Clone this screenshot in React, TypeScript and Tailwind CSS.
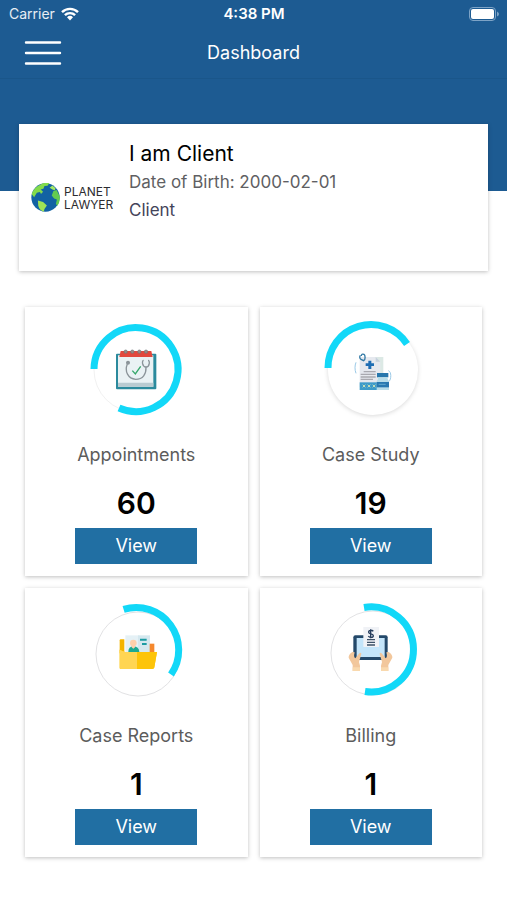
import type { ReactNode } from "react";

type Ring = {
  arc: string;
  disc: { cx: number; cy: number; r: number };
  faint?: boolean;
  raised?: boolean;
};

type Tile = {
  label: string;
  count: number;
  href: string;
  ring: Ring;
  icon: ReactNode;
};

function CalendarIcon() {
  return (
    <svg x="27" y="25" width="42" height="42" viewBox="0 0 126 126">
      <rect x="3" y="17" width="121" height="107" rx="3" fill="#2b8a9d" />
      <path d="M9 22h106v94H9z" fill="#eaf2f4" />
      <path d="M9 104h106v12H9z" fill="#b9cbd1" />
      <path d="M17 9h92l4 18H13z" fill="#e2483d" />
      <g fill="#9a8a86" stroke="#6d7679" strokeWidth="2">
        <circle cx="32" cy="11" r="5" />
        <circle cx="52" cy="11" r="5" />
        <circle cx="73" cy="11" r="5" />
        <circle cx="93" cy="11" r="5" />
      </g>
      <g fill="none" stroke="#8b9499" strokeWidth="4">
        <path d="M37 48c-9 22 2 44 25 46 22 0 32-16 31-37" />
        <path d="M86 37c-6 0-5 19 7 20 12-1 12-20 6-20" />
        <circle cx="39" cy="44" r="4" fill="#8b9499" />
      </g>
      <path d="M52 68l9 10 16-23" fill="none" stroke="#37a86b" strokeWidth="4" />
    </svg>
  );
}

function CaseStudyIcon() {
  return (
    <svg x="30" y="29" width="40" height="40" viewBox="0 0 120 120">
      <path d="M60 15h31v90H60z" fill="#dce9e5" />
      <path d="M20 15h48l14 14v76H20z" fill="#e6e9ef" />
      <path d="M68 15v14h14z" fill="#c5d1dd" />
      <path
        d="M22 10c-3 4-2 10 2 12l8 4c6-3 5-17 1-19-5-2-8 0-8 5"
        fill="none"
        stroke="#3179a5"
        strokeWidth="4"
      />
      <path d="M46 26h9v8h8v8h-8v9h-9v-9h-8v-8h8z" fill="#1e6db4" />
      <path
        d="M32 59h36M23 67h45M23 75h45M23 82h37"
        stroke="#a9a9b0"
        strokeWidth="4"
      />
      <path d="M20 91h54v23H20z" fill="#3d9bc9" />
      <path d="M72 63h34v13H72z" fill="#2777ac" />
      <path d="M75 76h29v5l4 7v26H71V88l4-7z" fill="#b8dde9" />
      <path d="M71 90h37v16H71z" fill="#2878b0" />
      <path d="M77 97h21" stroke="#62a9ce" strokeWidth="3" />
      <path
        d="M29 98l8 8m0-8l-8 8M44 98l8 8m0-8l-8 8M59 98l8 8m0-8l-8 8"
        stroke="#c1dcb8"
        strokeWidth="3"
      />
      <path
        d="M9 31c-4 10-4 22 0 33M106 56c10 3 9 26 2 32"
        fill="none"
        stroke="#9ac9e7"
        strokeWidth="3"
      />
    </svg>
  );
}

function FolderIcon() {
  return (
    <svg x="30" y="29" width="40" height="40" viewBox="0 0 120 120">
      <path d="M5 22q0-3 3-3h11v42H5z" fill="#f4b400" />
      <path d="M22 7h42v60H22z" fill="#e5f1f6" />
      <path d="M60 7h36v60H60z" fill="#d5e8ef" />
      <path d="M66 20h20M72 33h14" stroke="#1b9ca3" strokeWidth="6" />
      <path d="M95 32h14v35H95z" fill="#f5882d" />
      <path d="M31 57q0-16 15-17q17 1 18 17z" fill="#1ca991" />
      <circle cx="46" cy="30" r="10" fill="#ffd0ab" />
      <path d="M41 36h10v7l-5 4-5-4z" fill="#ffd0ab" />
      <path d="M5 50l16 7h96l-8 46q-1 5-6 5H8q-3 0-3-4z" fill="#ffc917" />
      <path d="M5 50l16 7h36v51H8q-3 0-3-4z" fill="#ffd553" />
      <path d="M103 57h14l-8 46q-1 5-6 5H57V57z" fill="#fdc409" />
    </svg>
  );
}

function BillingIcon() {
  return (
    <svg x="25" y="23" width="45" height="46" viewBox="0 0 135 138">
      <rect x="16" y="25" width="103" height="74" rx="6" fill="#24496a" />
      <path d="M26 33h84v57H26z" fill="#c4e5fa" />
      <path d="M46 0h47v60H46z" fill="#f0f2f6" />
      <path
        d="M76 13c-5-5-15-4-14 3 1 6 14 3 14 10 0 7-12 7-15 1M68 7v27"
        fill="none"
        stroke="#243c5c"
        strokeWidth="4"
      />
      <path d="M57 38h24M57 46h24M57 54h24" stroke="#3c5168" strokeWidth="4" />
      <path
        d="M13 75q-12 8-11 17l12 22v18h22v-16l-3-11 7-24q0-7-6-2L22 94q-6-3-2-18z"
        fill="#f2c79c"
      />
      <path
        d="M122 75q12 8 11 17l-12 22v18H99v-16l3-11-7-24q0-7 6-2l12 15q6-3 2-18z"
        fill="#f2c79c"
      />
      <path d="M14 121h22v11H14zM99 121h22v11H99z" fill="#f9d9ae" />
    </svg>
  );
}

const tiles: Tile[] = [
  {
    label: "Appointments",
    count: 60,
    href: "#appointments",
    ring: {
      arc: "M6 46A42 42 0 1 1 31 85",
      disc: { cx: 48, cy: 47, r: 42 },
      faint: true,
    },
    icon: <CalendarIcon />,
  },
  {
    label: "Case Study",
    count: 19,
    href: "#case-study",
    ring: {
      arc: "M5 45A43 43 0 0 1 84 21",
      disc: { cx: 50, cy: 47, r: 45 },
      raised: true,
    },
    icon: <CaseStudyIcon />,
  },
  {
    label: "Case Reports",
    count: 1,
    href: "#case-reports",
    ring: {
      arc: "M35.6 5.4A42.5 42.5 0 0 1 83 70.4",
      disc: { cx: 50, cy: 50, r: 42 },
    },
    icon: <FolderIcon />,
  },
  {
    label: "Billing",
    count: 1,
    href: "#billing",
    ring: {
      arc: "M41 3.5A42.5 42.5 0 1 1 42 87.5",
      disc: { cx: 50, cy: 49, r: 42 },
    },
    icon: <BillingIcon />,
  },
];

function RingBadge({ ring, children }: { ring: Ring; children: ReactNode }) {
  return (
    <svg
      className="size-24 overflow-visible"
      viewBox="0 0 96 96"
      aria-hidden="true"
    >
      <circle
        {...ring.disc}
        fill="white"
        stroke={ring.faint ? "#f1f1f1" : "#e2e2e4"}
        className={ring.raised ? "drop-shadow-sm" : ""}
        strokeWidth={ring.raised ? 0 : 1}
      />
      <path d={ring.arc} fill="none" stroke="#12d8f8" strokeWidth="7" />
      {children}
    </svg>
  );
}

function StatTile({ tile }: { tile: Tile }) {
  return (
    <section className="flex flex-col items-center bg-white pt-4 pb-3 shadow-[0_1px_4px_rgba(0,0,0,0.25)]">
      <RingBadge ring={tile.ring}>{tile.icon}</RingBadge>
      <h2 className="mt-6 text-lg leading-6 text-[#5c5c5c]">{tile.label}</h2>
      <p className="mt-4 text-3xl leading-10 font-semibold text-black">
        {tile.count}
      </p>
      <a
        href={tile.href}
        className="mt-[5px] flex h-9 w-[122px] items-center justify-center bg-[#216fa3] text-lg text-white"
      >
        View
      </a>
    </section>
  );
}

function StatusBar() {
  return (
    <div className="grid h-7 grid-cols-3 items-center pr-2 pl-[9px] leading-5">
      <div className="flex items-center gap-1.5">
        <span className="text-sm text-white/90">Carrier</span>
        <svg className="h-3.5 w-[18px]" viewBox="0 0 18 14" aria-hidden="true">
          <g fill="none" stroke="white" strokeWidth="2.4">
            <path d="M1 5.2a11.4 11.4 0 0 1 16 0" />
            <path d="M3.9 8.2a7.2 7.2 0 0 1 10.2 0" />
          </g>
          <path d="M6 10.3a4.3 4.3 0 0 1 6 0l-3 3.2z" fill="white" />
        </svg>
      </div>
      <span className="text-center text-[15px] font-semibold">4:38 PM</span>
      <svg
        className="h-3.5 w-[30px] justify-self-end"
        viewBox="0 0 30 14"
        aria-hidden="true"
      >
        <rect
          x="0.5"
          y="0.5"
          width="26"
          height="13"
          rx="3.5"
          fill="none"
          stroke="#7da3c6"
        />
        <rect x="2" y="2" width="23" height="10" rx="2" fill="white" />
        <path d="M28 4.5q2 1 2 2.5t-2 2.5z" fill="#7da3c6" />
      </svg>
    </div>
  );
}

export default function App() {
  return (
    <div className="min-h-screen bg-white pb-10 font-['Inter','Liberation_Sans',sans-serif]">
      {/* Header */}
      <header className="bg-[#1d5b92] pb-28 text-white">
        <StatusBar />
        <nav className="grid h-[51px] grid-cols-3 items-center border-b border-[#1a568a] px-6">
          <button type="button" aria-label="Open menu" className="w-fit">
            <svg className="h-6 w-[38px]" viewBox="0 0 38 24">
              <path
                d="M2 1.5h34M2 12h34M2 22.5h34"
                stroke="white"
                strokeWidth="2.4"
                strokeLinecap="round"
              />
            </svg>
          </button>
          <h1 className="text-center text-lg leading-6">Dashboard</h1>
        </nav>
      </header>

      <main>
        {/* Profile */}
        <section className="mx-[19px] -mt-[67px] flex min-h-[147px] bg-white pl-3 shadow-[0_1px_4px_rgba(0,0,0,0.25)]">
          <div className="flex w-[98px] shrink-0 items-center gap-1 self-center">
            <svg
              className="size-[29px] shrink-0"
              viewBox="0 0 84 84"
              aria-hidden="true"
            >
              <circle cx="42" cy="42" r="41" fill="#1262a3" />
              <path
                d="M28 4Q8 12 2 32l7 9 8-13 9-2 3 6 6-7-7-6 8-2 3-8 9-1 5-8Q41-3 28 4z"
                fill="#83db4b"
              />
              <path d="M62 7l-8 7 8 5 7 2 2-6z" fill="#a5e862" />
              <path
                d="M20 51l15 4 11 10-7 10-2 8Q24 79 21 66z"
                fill="#a0e455"
              />
              <path
                d="M83 38l-9-18-9 3-5 13 7 9 8 3-3 13 5 5Q85 53 83 38z"
                fill="#63ca50"
              />
            </svg>
            <div className="text-xs leading-[13px] text-[#2c2c30]">
              <p>PLANET</p>
              <p>LAWYER</p>
            </div>
          </div>
          <div className="pt-4 pb-4">
            <h2 className="text-[21px] leading-7 text-black">I am Client</h2>
            <p className="text-[17px] leading-7 text-[#5f5f63]">
              Date of Birth: 2000-02-01
            </p>
            <p className="text-[17px] leading-7 text-[#44445a]">Client</p>
          </div>
        </section>

        {/* Stats */}
        <div className="mt-9 grid grid-cols-2 gap-3 px-[25px]">
          {tiles.map((tile) => (
            <StatTile key={tile.label} tile={tile} />
          ))}
        </div>
      </main>
    </div>
  );
}
